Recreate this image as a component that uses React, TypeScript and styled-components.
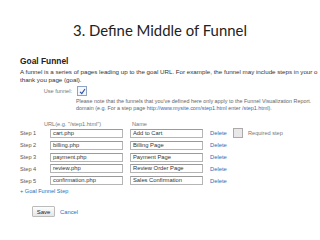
import React from "react";
import styled, { createGlobalStyle } from "styled-components";

const Global = createGlobalStyle`
  html, body { margin: 0; padding: 0; background: #fff; }
  body { width: 320px; height: 240px; overflow: hidden; }
`;

const Slide = styled.div`
  width: 320px;
  height: 240px;
  overflow: hidden;
  display: flex;
  flex-direction: column;
  font-family: "Liberation Sans", Arial, sans-serif;
`;

const Title = styled.h1`
  margin: 21px 0 0;
  text-align: center;
  font-family: Lato, "Open Sans", sans-serif;
  font-weight: 400;
  font-size: 14.9px;
  line-height: 18px;
  color: #222;
`;

const Panel = styled.div`
  padding-left: 20px;
  margin-top: 17px;
  display: flex;
  flex-direction: column;
  white-space: nowrap;
`;

const Heading = styled.h2`
  margin: 0;
  font-size: 8.4px;
  line-height: 10px;
  font-weight: 700;
  color: #222;
`;

const Intro = styled.p`
  margin: 2px 0 0;
  font-size: 6.2px;
  line-height: 8px;
  color: #333;
  overflow: hidden;
`;

const UseRow = styled.div`
  display: flex;
  align-items: center;
  margin-top: 2px;
  height: 10px;
`;

const Label = styled.span<{ $w?: number }>`
  font-size: 5.6px;
  color: #777;
  ${(p) => (p.$w ? `width: ${p.$w}px; text-align: right;` : "")}
`;

const Check = styled.span<{ $checked?: boolean }>`
  width: 8px;
  height: 8px;
  border: 1px solid ${(p) => (p.$checked ? "#8fa4c4" : "#aaa")};
  background: ${(p) => (p.$checked ? "#f4f7fc" : "#e8e8e8")};
  display: inline-flex;
  align-items: center;
  justify-content: center;
  box-sizing: content-box;
  flex: none;
`;

const Note = styled.div`
  margin: 2px 0 0 56px;
  font-size: 5.4px;
  line-height: 7px;
  color: #666;
`;

const Link = styled.span`
  color: #2a6ebb;
`;

const HeaderRow = styled.div`
  display: flex;
  margin-top: 7px;
  height: 9px;
  align-items: center;
`;

const Steps = styled.div`
  display: grid;
  grid-template-columns: 23px 73px 73px auto;
  column-gap: 7px;
  row-gap: 2.8px;
  align-items: center;
`;

const StepLabel = styled.span`
  font-size: 5.6px;
  color: #555;
`;

const Field = styled.div`
  height: 9px;
  box-sizing: border-box;
  border: 1px solid #b5b5b5;
  border-top-color: #9a9a9a;
  background: #fff;
  font-size: 5.8px;
  line-height: 7px;
  padding-left: 2px;
  color: #333;
  overflow: hidden;
`;

const Actions = styled.div`
  display: flex;
  align-items: center;
  gap: 5px;
`;

const DeleteLink = styled(Link)`
  font-size: 5.8px;
  width: 18px;
`;

const AddLink = styled(Link)`
  font-size: 5.6px;
  margin-top: 2px;
  line-height: 8px;
`;

const ButtonRow = styled.div`
  display: flex;
  align-items: center;
  gap: 5px;
  margin: 11px 0 0 12px;
`;

const Button = styled.button`
  width: 23px;
  height: 11px;
  padding: 0;
  border: 1px solid #bbb;
  border-radius: 1px;
  background: linear-gradient(#fdfdfd, #e6e6e6);
  font-family: inherit;
  font-size: 6px;
  color: #222;
`;

const CancelLink = styled(Link)`
  font-size: 5.8px;
`;

const steps = [
  ["cart.php", "Add to Cart"],
  ["billing.php", "Billing Page"],
  ["payment.php", "Payment Page"],
  ["review.php", "Review Order Page"],
  ["confirmation.php", "Sales Confirmation"],
];

export default function App() {
  return (
    <Slide>
      <Global />
      <Title>3. Define Middle of Funnel</Title>
      <Panel>
        <Heading>Goal Funnel</Heading>
        <Intro>
          A funnel is a series of pages leading up to the goal URL. For example, the funnel may include steps in your o
          <br />
          thank you page (goal).
        </Intro>
        <UseRow>
          <Label $w={52}>Use funnel:</Label>
          <span style={{ width: 5 }} />
          <Check $checked>
            <svg width="7" height="7" viewBox="0 0 7 7">
              <path d="M1 3.8 L2.8 5.6 L6 1" fill="none" stroke="#2b4f9e" strokeWidth="1.1" />
            </svg>
          </Check>
        </UseRow>
        <Note>
          Please note that the funnels that you've defined here only apply to the Funnel Visualization Report.
          <br />
          domain (e.g. For a step page <Link>http://www.mysite.com/step1.html</Link> enter <Link>/step1.html</Link>).
        </Note>
        <HeaderRow>
          <Label style={{ marginLeft: 24, width: 88 }}>URL(e.g. "/step1.html")</Label>
          <Label>Name</Label>
        </HeaderRow>
        <Steps>
          {steps.map(([url, name], i) => (
            <React.Fragment key={url}>
              <StepLabel>Step {i + 1}</StepLabel>
              <Field>{url}</Field>
              <Field>{name}</Field>
              <Actions>
                <DeleteLink>Delete</DeleteLink>
                {i === 0 && (
                  <>
                    <Check />
                    <Label>Required step</Label>
                  </>
                )}
              </Actions>
            </React.Fragment>
          ))}
        </Steps>
        <AddLink>+ Goal Funnel Step</AddLink>
        <ButtonRow>
          <Button>Save</Button>
          <CancelLink>Cancel</CancelLink>
        </ButtonRow>
      </Panel>
    </Slide>
  );
}
